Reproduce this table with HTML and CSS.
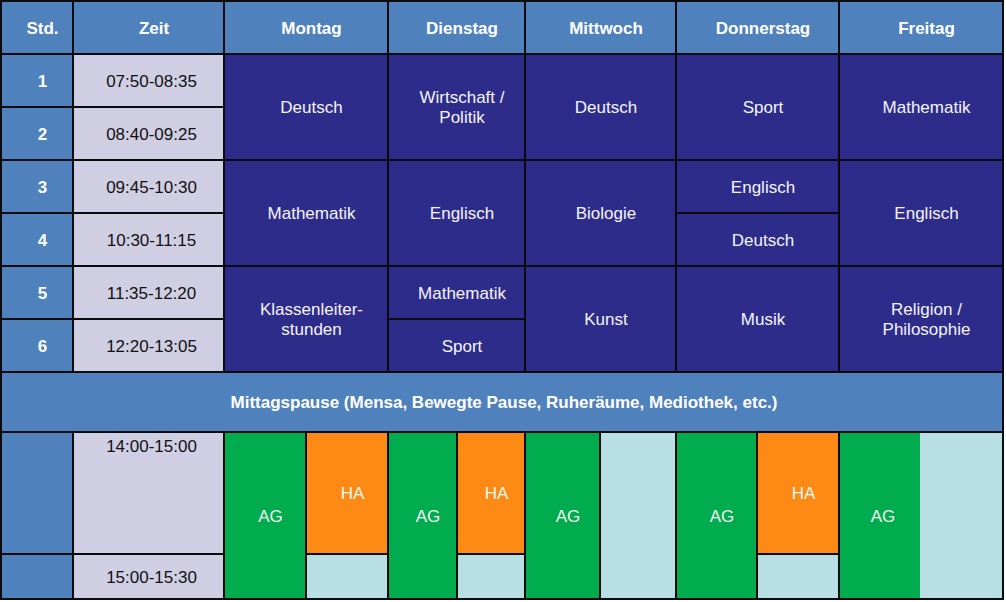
FILE: index.html
```html
<!DOCTYPE html>
<html lang="de">
<head>
<meta charset="utf-8">
<title>Stundenplan</title>
<link rel="stylesheet" href="styles.css">
</head>
<body>
<div class="plan">
  <div class="head c1">Std.</div>
  <div class="head">Zeit</div>
  <div class="head">Montag</div>
  <div class="head">Dienstag</div>
  <div class="head">Mittwoch</div>
  <div class="head">Donnerstag</div>
  <div class="head">Freitag</div>

  <div class="num r2">1</div>
  <div class="time r2">07:50-08:35</div>
  <div class="num r3">2</div>
  <div class="time r3">08:40-09:25</div>
  <div class="num r4">3</div>
  <div class="time r4">09:45-10:30</div>
  <div class="num r5">4</div>
  <div class="time r5">10:30-11:15</div>
  <div class="num r6">5</div>
  <div class="time r6">11:35-12:20</div>
  <div class="num r7">6</div>
  <div class="time r7">12:20-13:05</div>

  <div class="subj mo rows-2-4">Deutsch</div>
  <div class="subj mo rows-4-6">Mathematik</div>
  <div class="subj mo rows-6-8">Klassenleiter-<br>stunden</div>

  <div class="subj di rows-2-4">Wirtschaft /<br>Politik</div>
  <div class="subj di rows-4-6">Englisch</div>
  <div class="subj di r6">Mathematik</div>
  <div class="subj di r7">Sport</div>

  <div class="subj mi rows-2-4">Deutsch</div>
  <div class="subj mi rows-4-6">Biologie</div>
  <div class="subj mi rows-6-8">Kunst</div>

  <div class="subj do rows-2-4">Sport</div>
  <div class="subj do r4">Englisch</div>
  <div class="subj do r5">Deutsch</div>
  <div class="subj do rows-6-8">Musik</div>

  <div class="subj fr rows-2-4">Mathematik</div>
  <div class="subj fr rows-4-6">Englisch</div>
  <div class="subj fr rows-6-8">Religion /<br>Philosophie</div>

  <div class="pause">Mittagspause (Mensa, Bewegte Pause, Ruheräume, Mediothek, etc.)</div>

  <div class="num r9"></div>
  <div class="time time-top r9">14:00-15:00</div>
  <div class="num r10"></div>
  <div class="time r10">15:00-15:30</div>

  <div class="after mo aft-mo">
    <div class="ag">AG</div>
    <div class="ha">HA</div>
    <div class="free"></div>
  </div>
  <div class="after di aft-di">
    <div class="ag">AG</div>
    <div class="ha">HA</div>
    <div class="free"></div>
  </div>
  <div class="after mi aft-mi">
    <div class="ag">AG</div>
    <div class="free full"></div>
  </div>
  <div class="after do aft-do">
    <div class="ag">AG</div>
    <div class="ha">HA</div>
    <div class="free"></div>
  </div>
  <div class="after fr aft-fr">
    <div class="ag">AG</div>
    <div class="free full"></div>
  </div>
</div>
</body>
</html>
```

FILE: styles.css
```css
* { box-sizing: border-box; }

html, body {
  margin: 0;
  padding: 0;
  background: #ffffff;
}

body {
  font-family: "Liberation Sans", Arial, sans-serif;
  font-size: 17px;
}

.plan {
  display: grid;
  width: 1004px;
  grid-template-columns: 70px 149px 162px 135px 149px 161px 162px;
  grid-template-rows: repeat(7, 51px) 58px 120px 43px;
  gap: 2px;
  padding: 2px;
  background: #0a0a0f;
}

.plan > div {
  display: flex;
  align-items: center;
  justify-content: center;
  text-align: center;
  line-height: 20px;
  padding: 2px 0 0 11px;
}

.head {
  background: #4f81bd;
  color: #ffffff;
  font-weight: bold;
  grid-row: 1;
}

.num {
  grid-column: 1;
  background: #4f81bd;
  color: #ffffff;
  font-weight: bold;
}

.time {
  grid-column: 2;
  background: #d0cee2;
  color: #111111;
}

.plan > .time {
  padding-left: 6px;
}

.plan > .time-top {
  align-items: flex-start;
  padding-top: 4px;
}

.subj {
  background: #2e2c8a;
  color: #f4f4fb;
}

.r2 { grid-row: 2; }
.r3 { grid-row: 3; }
.r4 { grid-row: 4; }
.r5 { grid-row: 5; }
.r6 { grid-row: 6; }
.r7 { grid-row: 7; }
.r9 { grid-row: 9; }
.r10 { grid-row: 10; }

.rows-2-4 { grid-row: 2 / 4; }
.rows-4-6 { grid-row: 4 / 6; }
.rows-6-8 { grid-row: 6 / 8; }

.mo { grid-column: 3; }
.di { grid-column: 4; }
.mi { grid-column: 5; }
.do { grid-column: 6; }
.fr { grid-column: 7; }

.pause {
  grid-row: 8;
  grid-column: 1 / -1;
  background: #4f81bd;
  color: #ffffff;
  font-weight: bold;
  font-size: 17px;
}

.plan > .pause {
  padding-left: 4px;
}

.plan > .after {
  grid-row: 9 / 11;
  display: grid;
  grid-template-rows: 120px 43px;
  gap: 2px;
  padding: 0;
  background: #0a0a0f;
  align-items: stretch;
  justify-content: stretch;
}

.aft-mo { grid-template-columns: 80px 80px; }
.aft-di { grid-template-columns: 67px 66px; }
.aft-mi { grid-template-columns: 73px 74px; }
.aft-do { grid-template-columns: 79px 80px; }
.plan > .aft-fr {
  grid-template-columns: 80px 82px;
  grid-template-rows: 122px 43px;
  gap: 0;
}

.after > div {
  display: flex;
  align-items: center;
  justify-content: center;
  color: #f4f8f4;
  padding: 2px 0 0 11px;
}

.aft-fr > .ag {
  padding-left: 6px;
}

.ag {
  grid-row: 1 / 3;
  grid-column: 1;
  background: #00ac4e;
}

.ha {
  grid-row: 1;
  grid-column: 2;
  background: #fd8a14;
}

.free {
  grid-row: 2;
  grid-column: 2;
  background: #b8dfe3;
}

.free.full {
  grid-row: 1 / 3;
}
```
